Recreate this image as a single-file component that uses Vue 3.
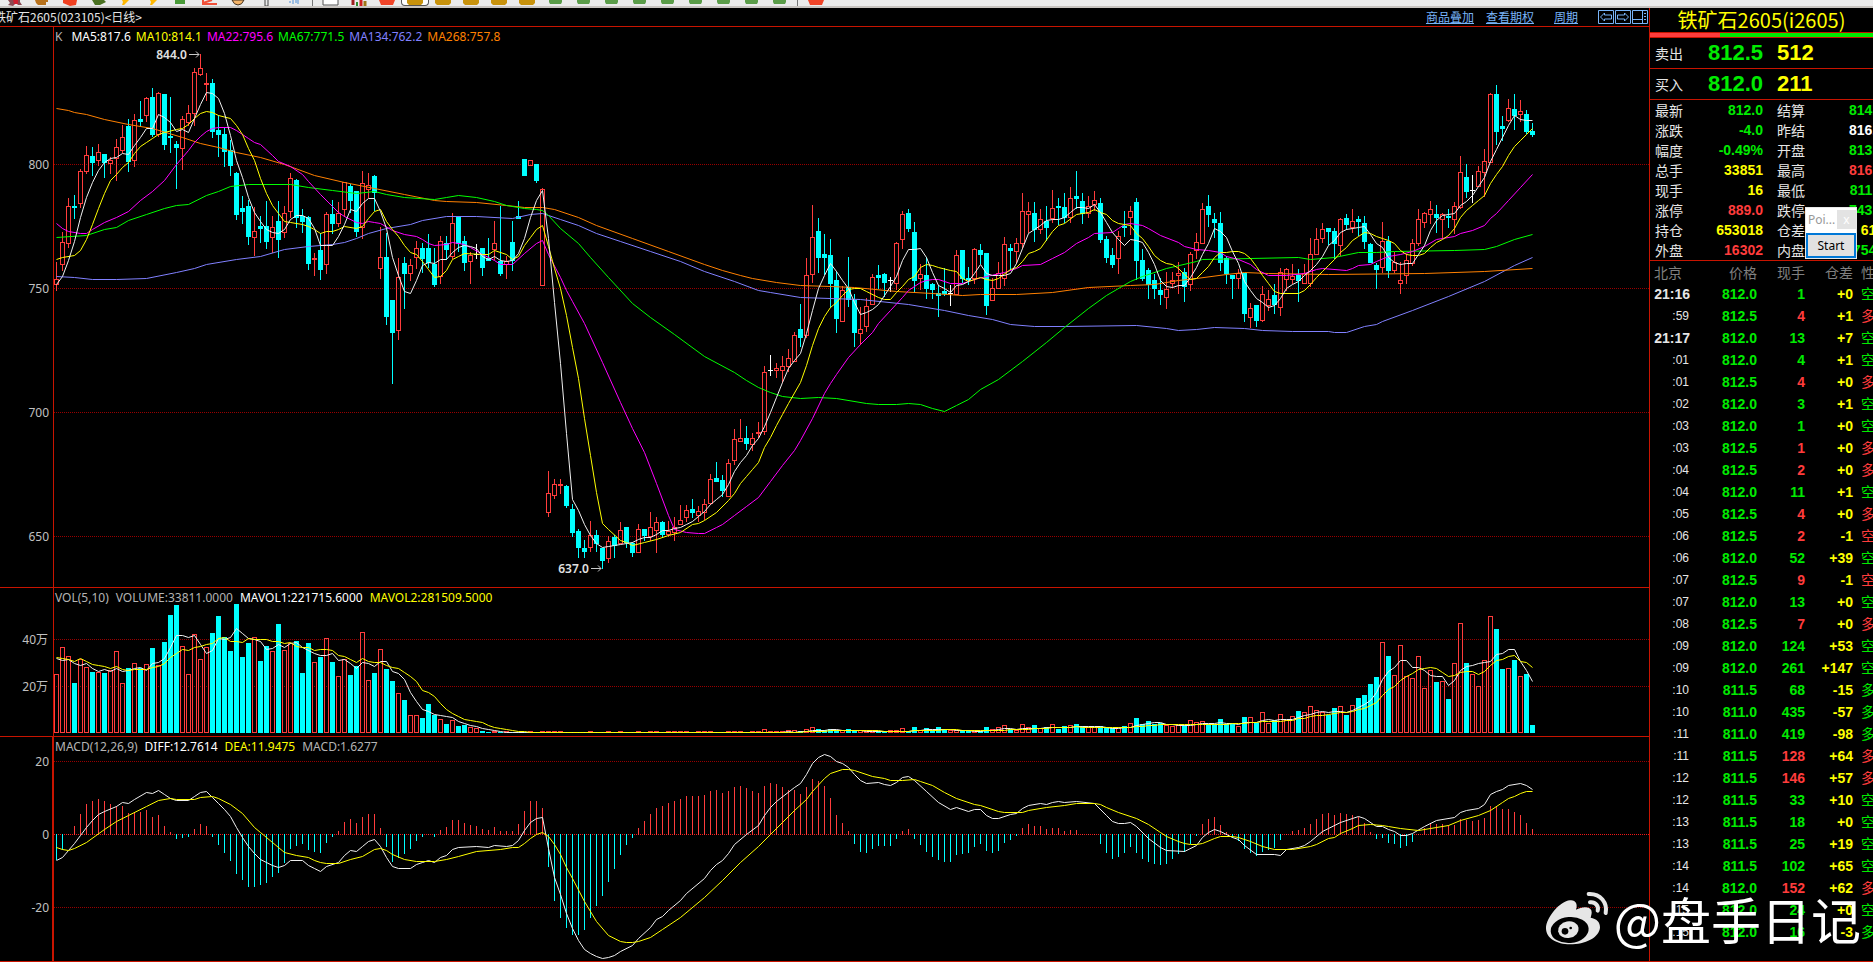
<script setup>
import { onMounted, onUnmounted, ref } from 'vue'

const FIRST_X = 56
const STEP = 6
const TOP = 27
const px = (i) => FIRST_X + i * STEP

// kind (r rising, c falling, w unchanged), then high, body top, body bottom and low levels
const candles = `
r262,279,284,291 r232,242,264,271 r198,206,243,248 c195,206,208,219 r169,171,203,208 r146,155,171,174 c147,156,163,176 r144,152,160,166 c154,154,163,178 r157,160,163,174
r139,147,158,181 r125,137,150,153 c119,126,162,172 r114,120,160,167 c101,119,122,126 r97,98,115,122 c88,97,135,137 r92,93,134,137 c94,94,145,150 c97,136,138,153
c141,144,148,189 r116,119,148,170 r105,113,122,126 r68,72,113,126 r54,68,74,76 r73,83,84,101 c79,83,132,138 c115,130,135,157 c128,134,152,167 c140,150,166,176
c172,173,215,220 c196,208,212,224 c200,206,237,245 r207,231,237,256 c216,226,229,243 c201,226,242,249 r216,227,237,253 c201,221,240,258 r206,213,232,238 r173,178,211,218
c179,180,218,228 c209,216,222,233 c216,217,264,270 r253,258,259,276 c233,250,270,280 r212,214,264,274 c200,214,224,234 r202,213,223,227 r182,182,209,217 c184,186,201,213
c191,191,232,237 r171,183,227,239 r173,185,189,198 c175,176,193,211 r227,257,268,279 c233,257,317,325 c300,300,333,384 r258,277,330,340 c257,263,274,309 r259,265,273,281
r241,248,257,269 c243,248,259,273 c234,248,263,268 c248,264,285,287 r236,241,276,284 c236,243,250,260 r213,223,256,259 c217,217,244,252 c236,241,263,271 r252,255,261,284
w244,254,254,259 c248,248,268,276 c238,258,261,261 r221,243,249,260 c206,261,274,276 r256,261,264,279 c221,242,261,271 c201,216,219,219 c159,159,176,176 r160,160,165,165
c164,164,181,183 r188,189,285,285 r471,493,512,517 r479,484,495,499 r479,484,485,494 c485,486,506,508 c504,509,533,537 c529,531,548,558 c540,548,552,558 r521,535,547,552
c530,535,544,552 c548,548,561,569 r536,541,558,563 c535,537,546,558 r522,530,543,544 c527,527,543,548 c542,543,553,557 r524,529,552,552 c529,529,536,541 r512,527,536,541
r517,522,530,553 c521,522,535,537 r521,531,534,537 r517,527,532,541 r505,520,524,525 r505,510,517,522 c499,509,513,518 r506,511,515,522 r499,504,512,520 r474,479,503,505
c462,478,482,482 c475,480,491,497 r459,463,496,497 r429,439,460,465 r419,438,441,441 c426,438,444,450 r433,438,444,451 r422,432,433,438 r366,372,431,435 w355,370,370,376
r363,368,370,378 r356,366,370,383 r349,358,366,372 r332,335,361,362 c304,329,338,347 r258,275,335,338 r205,237,274,283 c218,231,258,273 c234,254,258,275 c239,255,284,308
c271,280,319,333 r286,290,321,322 c257,287,300,307 c294,300,333,347 r307,329,333,345 r298,306,326,332 r274,277,304,305 c265,275,278,289 c273,274,283,297 w277,280,280,292
r242,243,283,290 r211,214,239,249 c209,213,229,232 c222,232,281,293 r264,274,278,290 c257,275,289,299 c283,284,290,299 c285,293,296,317 c268,291,294,296 w285,293,293,306
r250,255,294,295 c250,250,279,283 c267,278,280,285 r248,249,278,284 c244,250,255,264 c253,253,306,315 r278,288,300,301 r262,273,288,289 r237,244,278,286 c244,248,251,270
r238,243,251,264 r193,211,243,249 r202,211,214,233 c202,213,230,242 r209,219,229,234 c206,221,228,241 r190,208,218,223 c198,206,208,225 c193,207,218,223 r187,198,217,223
c171,196,199,209 c193,201,214,224 r196,206,213,218 r191,200,204,211 c198,203,240,243 c236,239,258,263 c248,255,265,268 r231,236,258,274 c211,226,228,237 r206,211,217,235
c198,202,261,280 c249,260,279,281 c268,270,285,299 c274,280,289,299 c278,290,295,305 r272,289,297,309 r272,280,283,288 r262,273,275,294 c268,272,287,302 r252,254,284,291
r233,242,250,259 r203,209,243,243 c195,206,215,227 c213,219,223,238 c212,223,263,271 c256,258,274,284 c275,275,279,299 r269,273,278,289 c273,273,314,322 r303,308,317,328
c305,305,321,327 r286,294,320,322 r290,299,305,311 c284,295,305,314 r268,272,307,316 r268,269,279,291 r264,276,279,284 c269,275,281,302 r264,273,283,284 r238,254,283,287
r228,239,254,255 r223,229,238,243 c228,228,232,245 c228,231,244,259 r218,219,245,256 c214,218,225,230 r209,221,227,233 c216,219,222,236 c216,223,242,249 c243,244,263,263
c263,265,270,289 r222,241,267,273 c236,241,271,278 r252,262,270,273 r262,280,283,294 r254,260,275,284 r239,243,263,266 r209,219,243,246 r212,213,222,228 r201,209,214,224
c205,214,218,233 r213,214,219,238 c209,216,218,228 r202,206,219,234 r156,172,207,209 c164,177,192,198 w175,190,190,203 r166,171,186,186 r149,161,172,197 r93,94,162,162
c85,94,132,145 c116,126,129,141 r99,108,120,122 c94,109,116,130 r100,111,114,122 c110,114,132,134 c123,131,135,137
`.trim().split(/\s+/).map((item, i) => {
  const [high, top, bottom, low] = item.slice(1).split(',').map(Number)
  return { i, x: px(i), kind: item[0], high, top, bottom, low }
})

const numbers = (text) => text.trim().split(/\s+/).map(Number)
const filled = (n, value) => Array(n).fill(value)

const volumes = [
  ...numbers(`675 648 657 683 660 668 672 673 673 671 652 684 668 664 668 665 648 666 642 615 605 647 675 635 660
    648 633 616 637 651 604 657 643 638 661 646 652 624 651 644 641 673 643 663 657 639 662 677 660 675
    666 633 681 673 650 669 681 694 700 716 716 718 704 715 720 724 721 726 725 728 729 731 732`),
  ...filled(45, 732),
  ...numbers(`730 732 732 732 731 731 731 730 728 729 730 729 730 731 729 731 731 731 731 731 731 731 731 729 731 727
    731 728 730 727 729 731 731 730 731 731 731 727 730 728 726 729 731 725 728 725 729 727 725 729 726 726
    724 726 728 728 726 728 728 728 726 724 718 724 721 724 723 726 727 726 725 721
    723 722 724 724 719 724 724 727 717 718 723 713 724 720 715 721 717 711 713 707 711 713 715 708 707 715
    706 698 695 684 677 643 656 676 646 677 679 657 689 671 682 682 699 664 624 663 675 687 661 617 629 669
    669 660 677 674 725`),
].map((y, i) => ({ x: px(i), y, kind: candles[i] ? candles[i].kind : 'c' }))

const histogram = numbers(`
859 849 834 826 814 804 801 799 801 804 806 806 813 812 812 810 817 815 826 832 838 837 836 829 824
826 836 844 852 860 873 879 886 886 884 882 876 872 862 848 845 843 849 851 852 842 836 831 822 819
823 817 814 814 828 846 861 857 853 848 840 836 834 836 830 827 820 820 823 825 826 829 830 827 831
831 831 824 811 801 801 808 866 900 917 927 934 934 929 917 905 895 881 868 854 844 837 828 821 814
808 806 803 801 799 796 796 796 795 791 790 793 791 787 786 788 791 793 786 783 784 787 790 790 794
787 779 781 786 798 815 823 831 843 851 852 848 845 845 845 838 831 829 838 844 851 856 859 861 861
854 853 852 846 843 850 852 850 842 839 835 828 824 826 826 829 828 828 831 830 830 834 834 834 843
852 858 856 852 846 852 858 861 863 864 863 858 853 851 843 835 824 819 817 825 832 837 840 848 852
855 851 849 847 839 834 831 830 828 824 819 814 813 815 813 814 815 817 823 832 838 837 842 843 847
845 841 834 828 824 824 824 825 825 819 820 821 820 818 806 807 809 809 812 815 823 829
`).map((y, i) => ({ x: px(i), y }))

const line = (pairs) => pairs.map(([i, y]) => `${px(i) + 0.5},${y + 0.5}`).join(' ')
const sparse = (text) => line(text.trim().split(/\s+/).map((p) => p.split(':').map(Number)))
const every = (text) => line(numbers(text).map((y, i) => [i, y]))

const average = (n, lead) =>
  line(volumes.map((_, i) => {
    if (i < n - 1) return [i, lead[i]]
    const part = volumes.slice(i - n + 1, i + 1)
    return [i, Math.round(part.reduce((sum, v) => sum + v.y, 0) / n)]
  }))

const priceLines = [
  { name: 'violet', points: sparse('0:276 3:277 6:279 10:279 15:278 20:272 23:268 25:264 30:259 34:256 38:249 42:246 46:244 48:242 50:238 52:233 55:228 59:224 61:220 65:216 70:216 76:218 79:214 81:213 84:219 87:225 90:233 94:241 99:251 104:261 108:271 113:281 117:290 119:292 124:297 134:299 142:304 148:310 152:315 156:319 159:324 163:326 168:326 180:325 185:328 187:330 190:329 193:327 198:328 201:330 206:331 212:331 213:332 215:332 218:326 220:324 221:321 226:310 232:296 238:281 243:265 246:257') },
  { name: 'orange', points: sparse('0:108 2:110 3:112 5:114 8:119 12:124 16:128 21:137 24:143 27:147 30:152 34:157 38:164 43:175 48:182 53:188 58:194 63:200 65:201 70:202 75:205 78:207 81:207 83:209 87:217 90:225 96:238 102:251 108:264 111:270 114:275 116:278 120:282 124:285 129:286 133:287 140:291 146:293 151:295 154:294 160:294 166:292 172:287 179:285 183:284 187:280 190:278 195:274 198:272 202:273 212:274 228:273 238:271 246:268') },
  { name: 'green', points: sparse('0:237 5:235 8:229 10:227 12:220 15:214 18:208 20:205 22:204 25:195 27:191 29:186 32:184 39:184 42:187 46:190 50:193 53:191 55:194 58:197 63:199 65:197 67:195 70:197 73:201 75:205 78:208 80:209 81:210 82:215 84:228 87:243 89:257 92:277 96:303 99:317 103:334 108:356 113:372 115:380 117:387 119:392 121:396 124:398 127:397 130:398 135:403 137:404 140:404 142:403 144:404 146:408 148:411 150:405 152:399 154:389 157:379 161:361 165:342 168:327 172:308 175:295 179:281 181:276 185:268 190:261 191:259 199:258 207:257 209:259 213:257 217:252 220:252 223:251 233:250 238:249 240:246 243:239 246:234') },
  { name: 'magenta', points: sparse('0:223 1:228 2:231 4:233 5:233 6:229 8:222 10:217 12:211 14:200 16:191 18:180 20:164 22:150 23:142 24:136 25:131 26:128 27:127 29:127 30:130 32:138 33:142 34:144 36:155 37:161 39:166 41:174 42:181 44:194 46:206 47:212 48:216 50:222 51:223 52:221 53:222 54:223 56:230 58:234 60:236 61:239 62:243 63:245 65:244 66:242 68:244 69:247 71:254 73:260 74:264 76:264 78:253 80:243 81:240 82:254 84:277 85:290 86:301 88:323 91:362 94:402 96:428 98:452 100:483 102:515 103:529 105:532 107:533 108:533 110:527 111:524 113:515 115:506 117:497 119:481 121:465 123:450 124:440 126:418 128:393 129:383 130:374 132:357 134:344 136:332 137:323 139:310 141:297 142:290 144:282 145:280 146:279 147:279 149:283 151:283 153:279 155:276 158:272 160:268 161:265 164:264 166:258 168:252 170:243 172:237 173:233 176:232 177:228 178:224 179:223 181:225 182:228 184:235 187:242 188:246 190:249 192:250 194:252 195:256 197:259 199:264 200:269 202:275 205:275 208:273 210:269 211:268 215:270 216:268 217:265 219:264 220:261 222:256 224:254 226:251 228:246 230:239 233:236 234:233 236:230 238:225 239:218 240:213 242:200 244:187 246:174') },
  { name: 'yellow', points: sparse('0:259 1:257 3:255 4:250 5:239 6:224 7:208 8:193 9:180 10:174 11:167 12:162 13:153 14:146 15:142 16:138 17:134 18:132 20:129 21:128 22:124 23:118 24:113 25:111 26:112 27:115 29:118 30:125 31:134 32:148 33:160 34:178 35:193 36:205 37:213 38:221 39:222 41:224 42:226 43:229 44:233 45:231 46:231 47:229 48:226 50:228 51:226 52:218 53:211 54:209 55:221 56:229 57:236 58:245 59:252 60:254 61:261 62:269 63:277 64:276 65:270 66:259 67:256 68:253 71:254 72:254 73:250 75:254 76:259 77:256 78:245 79:237 80:229 81:225 82:246 83:268 84:288 85:315 86:347 87:378 88:418 89:455 90:492 91:523 92:529 94:540 95:542 96:545 98:542 100:539 102:535 104:532 106:524 107:523 108:520 110:512 112:500 113:493 114:483 115:476 116:469 117:462 118:447 119:437 120:425 121:414 122:403 124:382 125:365 126:345 127:328 128:316 129:307 130:302 131:295 132:289 133:288 134:288 135:291 137:297 138:299 139:299 140:292 141:286 142:279 143:276 144:267 145:264 146:265 147:267 149:270 150:271 151:278 152:281 153:279 154:277 155:279 156:280 157:278 159:269 160:267 161:261 162:253 163:251 164:248 166:231 167:225 168:223 170:214 172:212 173:209 174:212 175:214 176:220 177:223 179:225 180:233 181:238 182:246 183:255 184:260 185:263 186:264 187:268 188:274 189:279 190:278 191:272 192:266 193:257 194:252 195:252 196:251 197:251 198:253 199:258 200:266 201:275 202:283 203:291 204:293 207:293 208:290 209:284 210:277 211:271 212:265 213:259 214:252 215:247 216:240 217:236 218:232 219:233 220:236 221:238 222:240 223:243 224:250 225:254 226:255 227:255 228:253 229:247 230:242 231:239 232:235 233:228 234:217 235:210 236:205 237:200 238:195 239:183 240:174 241:166 242:155 243:146 244:140 245:134 246:128') },
  { name: 'white', points: every(`284 276 260 241 217 197 182 170 162 158 157 153 154 145 137 128 128 114 117 122 131 129 132 118 104
    92 93 98 113 135 160 177 197 212 221 229 232 233 229 219 215 215 218 228 245 245 245 236 224 209
    211 203 198 198 211 228 257 275 291 293 280 265 262 263 259 259 252 247 245 246 248 256 259 256 260
    261 260 253 238 217 200 190 238 302 363 433 499 510 524 535 543 547 546 545 544 543 542 539 537 537
    534 530 530 528 527 524 521 516 511 504 499 494 484 471 462 455 445 438 426 412 397 382 368 360 353
    333 310 288 275 263 271 280 288 302 314 312 309 304 295 286 276 260 249 249 248 257 272 285 288 292
    285 284 281 273 264 273 275 275 275 273 263 248 233 229 225 220 219 219 217 212 207 207 208 204 212
    222 232 239 245 239 240 242 252 264 280 286 287 285 285 277 267 254 243 228 231 237 251 263 281 290
    298 302 307 305 298 288 284 281 275 270 264 256 245 240 232 229 228 227 226 234 243 247 257 262 264
    263 263 254 245 230 220 215 214 213 205 201 195 186 177 161 149 137 125 115 119 120 120`) },
]

const volumeLines = [
  { name: 'white', points: average(5, [658, 660, 659, 663]) },
  { name: 'yellow', points: average(10, [657, 658, 659, 661, 658, 661, 664, 665, 666]) },
]

const macdLines = [
  { name: 'white', points: sparse('0:860 1:857 2:850 3:843 4:835 5:827 6:820 7:814 8:811 10:806 11:802 12:803 13:799 15:792 16:793 17:790 18:794 19:798 20:800 22:800 23:796 24:792 25:791 26:797 27:803 28:809 29:816 30:827 31:837 32:846 33:853 34:859 35:862 36:865 37:867 38:865 39:860 41:860 42:865 43:868 44:871 45:866 47:862 48:855 49:850 50:851 51:846 52:841 53:839 54:846 55:857 56:866 57:868 59:868 60:864 61:862 62:860 63:862 64:857 65:855 66:849 67:847 70:846 72:847 73:845 75:846 76:845 77:840 78:830 79:822 80:818 81:817 82:848 83:877 84:894 85:913 86:928 87:940 88:949 89:953 90:956 91:958 92:957 93:955 94:951 96:945 97:938 99:927 100:919 101:916 102:910 104:900 105:893 108:878 109:870 110:864 111:860 112:853 113:844 115:834 117:825 118:815 119:807 120:801 123:787 124:783 125:774 126:763 127:757 128:754 129:756 130:761 131:763 132:767 133:774 134:780 135:783 137:782 138:784 139:785 140:782 141:777 142:776 143:780 145:791 147:802 149:809 150:807 152:811 153:809 154:809 155:815 156:818 157:818 159:814 160:813 161:808 162:805 164:803 165:804 166:802 167:801 168:802 170:801 173:803 175:815 176:821 177:823 178:823 179:822 180:826 182:838 184:847 185:850 188:851 190:845 191:837 192:832 193:829 194:831 196:837 197:839 198:845 200:854 203:854 204:855 205:849 207:847 208:845 209:841 211:831 212:828 214:822 216:818 217:816 218:818 220:826 221:826 222:829 223:831 224:835 225:835 226:833 228:826 230:820 233:817 234:812 235:810 237:808 238:804 239:794 240:791 241:789 242:785 244:783 245:785 246:789') },
  { name: 'yellow', points: sparse('0:847 1:849 2:850 3:848 5:842 8:829 10:821 12:815 15:806 17:800 19:798 20:799 23:799 24:797 26:796 27:798 29:804 31:813 33:827 34:832 36:842 38:852 40:855 42:857 43:860 44:862 45:863 47:863 49:859 51:856 53:849 54:848 55:850 56:854 58:859 60:861 63:861 65:859 67:856 70:851 74:849 76:847 77:847 78:843 79:838 80:834 81:832 82:836 83:844 84:854 85:867 86:878 88:901 90:921 92:935 94:941 95:942 96:942 97:941 99:937 101:929 104:917 108:897 111:880 114:862 117:846 119:834 121:822 123:810 125:799 126:791 128:778 129:773 131:769 132:769 133:770 136:776 138:778 139:780 141:780 143:779 144:781 146:785 148:792 150:798 153:804 154:805 157:811 158:812 161:812 162:810 165:807 168:805 170:803 173:803 174:804 175:807 177:812 180:818 182:824 184:832 185:836 187:841 188:843 189:844 190:844 191:843 193:838 194:836 196:836 197:837 199:841 201:846 203:849 206:849 209:846 210:844 212:838 213:837 214:833 216:828 217:825 219:824 221:825 222:826 224:828 227:830 229:828 230:827 232:825 234:820 237:815 239:810 241:802 242:798 243:796 244:793 245:791 246:791') },
]

const maLegend = [
  ['K', 'label wide'], ['MA5:817.6', 'white'], ['MA10:814.1', 'yellow'], ['MA22:795.6', 'magenta'],
  ['MA67:771.5', 'green'], ['MA134:762.2', 'violet'], ['MA268:757.8', 'orange'],
]
const volLegend = [
  ['VOL(5,10)', 'label'], ['VOLUME:33811.0000', 'label'], ['MAVOL1:221715.6000', 'white'], ['MAVOL2:281509.5000', 'yellow'],
]
const macdLegend = [
  ['MACD(12,26,9)', 'label'], ['DIFF:12.7614', 'white'], ['DEA:11.9475', 'yellow'], ['MACD:1.6277', 'label'],
]

const quotes = [
  ['最新', '812.0', 'green', '结算', '814.0', 'green'],
  ['涨跌', '-4.0', 'green', '昨结', '816.0', 'white'],
  ['幅度', '-0.49%', 'green', '开盘', '813.0', 'green'],
  ['总手', '33851', 'yellow', '最高', '816.0', 'red'],
  ['现手', '16', 'yellow', '最低', '811.0', 'green'],
  ['涨停', '889.0', 'red', '跌停', '743.0', 'green'],
  ['持仓', '653018', 'yellow', '仓差', '610', 'yellow'],
  ['外盘', '16302', 'red', '内盘', '17549', 'green'],
]

// time, price, volume, volume colour, open interest change, side, side colour
const ticks = `
21:16 812.0 1 green +0 空 green
:59 812.5 4 red +1 多 red
21:17 812.0 13 green +7 空 green
:01 812.0 4 green +1 空 green
:01 812.5 4 red +0 多 red
:02 812.0 3 green +1 空 green
:03 812.0 1 green +0 空 green
:03 812.5 1 red +0 多 red
:04 812.5 2 red +0 多 red
:04 812.0 11 green +1 空 green
:05 812.5 4 red +0 多 red
:06 812.5 2 red -1 空 red
:06 812.0 52 green +39 空 green
:07 812.5 9 red -1 空 red
:07 812.0 13 green +0 空 green
:08 812.5 7 red +0 多 red
:09 812.0 124 green +53 空 green
:09 812.0 261 green +147 空 green
:10 811.5 68 green -15 多 green
:10 811.0 435 green -57 多 green
:11 811.0 419 green -98 多 green
:11 811.5 128 red +64 多 red
:12 811.5 146 red +57 多 red
:12 811.5 33 green +10 空 green
:13 811.5 18 green +0 空 green
:13 811.5 25 green +19 空 green
:14 811.5 102 green +65 空 green
:14 812.0 152 red +62 多 red
:15 812.0 24 green +0 空 green
:15 812.0 16 green -3 多 green
`.trim().split('\n').map((row) => row.split(' '))

const tools = [
  'figure', 'pot', 'book', 'ball', 'bolt', 'bolt', 'block', 'chart', 'coin', 'pin', 'bars', 'sep',
  'screen', 'columns', 'seal', 'gold active', 'gold', 'gold', 'gold', 'gold',
  'leaf', 'leaf', 'leaf', 'leaf', 'leaf', 'leaf', 'leaf', 'leaf', 'leaf', 'sep', 'seal',
]

const dialogOpen = ref(true)
const onKey = (e) => { if (e.key === 'Escape') dialogOpen.value = false }
onMounted(() => window.addEventListener('keydown', onKey))
onUnmounted(() => window.removeEventListener('keydown', onKey))
</script>

<template>
  <div class="terminal">
    <div class="toolbar" role="toolbar" aria-label="工具栏">
      <template v-for="(tool, n) in tools" :key="n">
        <span v-if="tool === 'sep'" class="sep"></span>
        <button v-else type="button" class="tool" :class="tool" :aria-label="tool">
          <svg width="20" height="6" viewBox="0 0 20 6">
            <template v-if="tool === 'figure'">
              <path d="M4 0h12v2l2 3h-4l-2-2-3 3-5-1 2-2z" fill="#8a4a52" /><path d="M9 0h5v4h-4z" fill="#d02030" />
            </template>
            <path v-else-if="tool === 'pot'" d="M3 0h13v2h-2v3H6l-2-2z" fill="#b8721c" />
            <path v-else-if="tool === 'book'" d="M3 0h14l-1 5-6 1-7-3z" fill="#f04020" />
            <path v-else-if="tool === 'ball'" d="M4 0h12l2 2-6 3H7z" fill="#4a7020" />
            <path v-else-if="tool === 'bolt'" d="M6 0h7l-5 5H6l1-3z" fill="#ffb800" />
            <rect v-else-if="tool === 'block'" x="3" width="10" height="4" fill="#4a9a38" />
            <path v-else-if="tool === 'chart'" d="M3 0v4h14M3 3l9-3" fill="none" stroke="#f05038" stroke-width="2" />
            <path v-else-if="tool === 'coin'" d="M4 0q2 5 6 5t6-5z" fill="#f5b468" stroke="#403020" stroke-width="1" />
            <path v-else-if="tool === 'pin'" d="M9 0v6h3V0" fill="none" stroke="#444" stroke-width="1" />
            <path v-else-if="tool === 'bars'" d="M6 3v-2M9 4V0M12 3V0M14 4V0" stroke="#4c8fd8" stroke-width="1" />
            <path v-else-if="tool === 'screen'" d="M2 0v5h15V0" fill="#fff" stroke="#555" stroke-width="1" />
            <template v-else-if="tool === 'columns'">
              <path d="M4 0v5" stroke="#a02020" stroke-width="3" /><path d="M8 2v4" stroke="#2c8a2c" stroke-width="2" />
              <path d="M12 0v6" stroke="#d02020" stroke-width="3" /><path d="M16 1v5" stroke="#a07818" stroke-width="3" />
            </template>
            <path v-else-if="tool === 'seal'" d="M2 0h16l-2 5H4z" fill="#f04428" />
            <path v-else-if="tool.startsWith('gold')" d="M2 0h16v3l-2 2H4L2 3z" fill="#c8920c" />
            <path v-else d="M4 0h13v2l-1 2H5L4 2z" fill="#5a9c48" />
          </svg>
        </button>
      </template>
    </div>

    <main class="work">
      <header class="titlebar">
        <h1>铁矿石2605(023105)&lt;日线&gt;</h1>
        <nav>
          <a href="#overlay">商品叠加</a>
          <a href="#options">查看期权</a>
          <a href="#period" class="period">周期</a>
          <span class="modes">
            <button type="button" aria-label="左移">
              <svg width="16" height="14" viewBox="0 0 16 14"><path d="M.5.5h15v13H.5zM2.500 7l4-4v2h7v4h-7v2z" /></svg>
            </button>
            <button type="button" aria-label="右移">
              <svg width="16" height="14" viewBox="0 0 16 14"><path d="M.5.5h15v13H.5zM13.500 7l-4-4v2h-7v4h7v2z" /></svg>
            </button>
            <button type="button" aria-label="面板">
              <svg width="16" height="14" viewBox="0 0 16 14"><path d="M.5.5h15v13H.5zM.5 9.500h10M10.500.5v13M12 3.500h2M12 6.500h2M12 9.500h2" /></svg>
            </button>
          </span>
        </nav>
      </header>

      <section class="panel price" aria-label="K线">
        <svg class="plot" width="100%" height="100%">
          <g :transform="`translate(0,${-TOP})`">
            <line v-for="y in [164, 288, 412, 536]" :key="y" class="grid" x1="54" x2="100%" :y1="y + 0.5" :y2="y + 0.5" />
            <text v-for="(y, n) in [164, 288, 412, 536]" :key="'t' + n" class="axis" x="49" :y="y + 5">{{ 800 - n * 50 }}</text>
            <g class="crisp">
              <g v-for="c in candles" :key="c.i" :class="c.kind">
                <rect v-if="c.kind === 'c'" :x="c.x" :y="c.high" width="1" :height="c.low - c.high" />
                <template v-else>
                  <rect class="wick" :x="c.x" :y="c.high" width="1" :height="Math.max(c.top - c.high, 0)" />
                  <rect class="wick" :x="c.x" :y="c.bottom" width="1" :height="Math.max(c.low - c.bottom, 0)" />
                </template>
                <rect v-if="c.kind === 'c'" :x="c.x - 2" :y="c.top" width="5" :height="c.bottom - c.top" />
                <rect v-else-if="c.kind === 'r'" class="hollow" :x="c.x - 1.5" :y="c.top + 0.5" width="4" :height="c.bottom - c.top" />
                <rect v-else :x="c.x - 2" :y="c.top" width="5" height="1" />
              </g>
            </g>
            <polyline v-for="l in priceLines" :key="l.name" class="curve" :class="l.name" :points="l.points" />
            <text class="mark" x="187" y="59">844.0</text>
            <path class="arrow" d="M189 54.500h10M196 51.500l3 3-3 3" />
            <text class="mark" x="589" y="573">637.0</text>
            <path class="arrow" d="M591 568.500h10M598 565.500l3 3-3 3" />
          </g>
        </svg>
        <p class="legend"><span v-for="[text, tone] in maLegend" :key="text" :class="tone">{{ text }}</span></p>
      </section>

      <section class="panel volume" aria-label="成交量">
        <svg class="plot" width="100%" height="100%">
          <g transform="translate(0,-588)">
            <line v-for="y in [639, 686]" :key="y" class="grid" x1="54" x2="100%" :y1="y + 0.5" :y2="y + 0.5" />
            <text class="axis" x="48" y="644">40万</text>
            <text class="axis" x="48" y="691">20万</text>
            <g class="crisp">
              <g v-for="(v, n) in volumes" :key="n" :class="v.kind === 'c' ? 'c' : 'r'">
                <rect v-if="v.kind === 'c'" :x="v.x - 2" :y="v.y" width="5" :height="733 - v.y" />
                <rect v-else class="hollow" :x="v.x - 1.5" :y="v.y - 0.5" width="4" :height="733 - v.y" />
              </g>
            </g>
            <polyline v-for="l in volumeLines" :key="l.name" class="curve" :class="l.name" :points="l.points" />
          </g>
        </svg>
        <p class="legend"><span v-for="[text, tone] in volLegend" :key="text" :class="tone">{{ text }}</span></p>
      </section>

      <section class="panel macd" aria-label="MACD">
        <svg class="plot" width="100%" height="100%">
          <g transform="translate(0,-737)">
            <line class="grid" x1="54" x2="100%" y1="761.5" y2="761.5" />
            <line class="grid zero" x1="54" x2="100%" y1="834.5" y2="834.5" />
            <line class="grid" x1="54" x2="100%" y1="907.5" y2="907.5" />
            <text class="axis" x="49" y="766">20</text>
            <text class="axis" x="49" y="839">0</text>
            <text class="axis" x="49" y="912">-20</text>
            <g class="crisp">
              <rect
                v-for="h in histogram" :key="h.x" :class="h.y > 834 ? 'down' : 'up'" :x="h.x"
                :y="Math.min(h.y, 834)" width="1" :height="Math.abs(h.y - 834) + 1"
              />
            </g>
            <polyline v-for="l in macdLines" :key="l.name" class="curve" :class="l.name" :points="l.points" />
          </g>
        </svg>
        <p class="legend"><span v-for="[text, tone] in macdLegend" :key="text" :class="tone">{{ text }}</span></p>
      </section>
    </main>

    <aside class="side">
      <h2>铁矿石2605(i2605)</h2>
      <div class="ratio"><span></span></div>
      <dl class="book-row"><dt>卖出</dt><dd class="green">812.5</dd><dd class="yellow size">512</dd></dl>
      <dl class="book-row"><dt>买入</dt><dd class="green">812.0</dd><dd class="yellow size">211</dd></dl>
      <table class="quotes">
        <tbody>
          <tr v-for="q in quotes" :key="q[0]">
            <th scope="row">{{ q[0] }}</th><td class="first" :class="q[2]">{{ q[1] }}</td>
            <th scope="row" class="next">{{ q[3] }}</th><td class="second" :class="q[5]">{{ q[4] }}</td>
          </tr>
        </tbody>
      </table>
      <table class="ticks">
        <thead>
          <tr><th scope="col" class="time">北京</th><th scope="col" class="cost">价格</th><th scope="col" class="vol">现手</th><th scope="col" class="diff">仓差</th><th scope="col" class="kind">性</th></tr>
        </thead>
        <tbody>
          <tr v-for="(t, n) in ticks" :key="n">
            <td class="time" :class="{ minor: t[0].startsWith(':') }">{{ t[0] }}</td>
            <td class="cost green">{{ t[1] }}</td>
            <td class="vol" :class="t[3]">{{ t[2] }}</td>
            <td class="diff yellow">{{ t[4] }}</td>
            <td class="kind" :class="t[6]">{{ t[5] }}</td>
          </tr>
        </tbody>
      </table>
    </aside>

    <div v-if="dialogOpen" class="dialog" role="dialog" aria-label="Poi...">
      <div class="caption"><span>Poi...</span><button type="button" class="close" aria-label="关闭" @click="dialogOpen = false">x</button></div>
      <button type="button" class="start">Start</button>
    </div>

    <div class="signature">
      <svg width="67" height="55" viewBox="0 0 201 165">
        <path fill="#e6e6e6" d="M75 28C92 26 99 40 93 56c17-9 41-11 46 2 3 9-1 16-2 22 17 3 29 13 28 30-3 30-44 50-90 50C35 160 3 142 3 112 3 80 45 30 75 28z" />
        <ellipse cx="74" cy="117" rx="57" ry="39" transform="rotate(-5 74 117)" />
        <ellipse cx="70" cy="116" rx="31" ry="25" fill="#e6e6e6" transform="rotate(-10 70 116)" />
        <circle cx="60" cy="121" r="10" /><circle cx="77" cy="111" r="4" />
        <path d="M131 9c36-2 57 27 51 57M135 34c17-2 27 12 23 25" fill="none" stroke="#e6e6e6" stroke-width="12" stroke-linecap="round" />
      </svg>
      <span>@盘手日记</span>
    </div>
  </div>
</template>

<style>
body { background: #000; overflow: hidden; }
</style>

<style scoped>
.terminal {
  position: relative;
  display: grid;
  grid-template-columns: minmax(0, 1fr) 224px;
  grid-template-rows: 8px minmax(0, 1fr);
  min-height: 100vh;
  overflow: hidden;
  box-sizing: border-box;
  background: #000;
  color: #e6e6e6;
  font: 12px/16px "Noto Sans", "Noto Sans CJK SC", sans-serif;
}
.terminal * { box-sizing: border-box; }
h1, h2, p, dl, dd { margin: 0; font-weight: 400; }
button { padding: 0; border: 0; background: none; font: inherit; }

.toolbar {
  grid-column: 1 / -1;
  display: flex;
  overflow: hidden;
  background: #ebebeb;
  border-bottom: 2px solid #c8c4c0;
}
.tool { flex: none; width: 28px; height: 6px; display: flex; justify-content: center; overflow: hidden; }
.tool svg { display: block; }
.tool.active { background: #fff; border: 1px solid #555; border-top: 0; border-radius: 0 0 4px 4px; }
.sep { width: 1px; margin: 0 4px; background: #777; }

.work { display: flex; flex-direction: column; min-width: 0; }
.titlebar {
  flex: none;
  display: flex;
  justify-content: space-between;
  align-items: center;
  height: 19px;
  border-bottom: 1px solid #c81400;
}
.titlebar h1 { margin-left: -6px; font: 12px/18px "Noto Sans CJK SC", sans-serif; white-space: nowrap; }
.titlebar nav { display: flex; align-items: center; gap: 12px; padding-right: 1px; }
.titlebar a { color: #78b4f8; font: 12px/16px "Noto Sans CJK SC", sans-serif; }
.titlebar .period { margin-left: 8px; }
.modes { display: flex; gap: 1px; margin-left: 8px; }
.modes svg { display: block; fill: none; stroke: #78b4f8; stroke-width: 1; }

.panel { position: relative; border-bottom: 1px solid #c81400; }
.panel::before { content: ""; position: absolute; top: 0; bottom: 0; left: 53px; width: 1px; background: #c81400; }
.price { flex: 1 1 561px; min-height: 561px; }
.volume { flex: 0 0 149px; }
.macd { flex: 0 0 225px; }
.macd::before { left: 52px; width: 2px; }
.plot { position: absolute; inset: 0; display: block; }
.legend { position: relative; display: flex; gap: 5px; padding: 2px 0 0 55px; white-space: nowrap; }
.volume .legend, .macd .legend { gap: 7px; }
.legend .wide { margin-right: 4px; }
.legend .label { color: #b4b4b4; }

.grid { stroke: #980000; stroke-width: 1; stroke-dasharray: 1 1; shape-rendering: crispEdges; }
.grid.zero { stroke: #f01818; }
.axis { fill: #c0c0c0; text-anchor: end; font-size: 12px; }
.mark { fill: #e0e0e0; text-anchor: end; font-size: 12px; font-weight: 600; }
.arrow { fill: none; stroke: #c8c8c8; stroke-width: 1; }
.crisp { shape-rendering: crispEdges; }
.c, .down { fill: #0ff; }
.r, .up { fill: #ff3c3c; }
.w { fill: #fff; }
.hollow { fill: none; stroke: #ff3c3c; stroke-width: 1; }
.curve { fill: none; stroke-width: 1; }

.white { color: #fff; }
.yellow { color: #ff0; }
.magenta { color: #f0f; }
.green { color: #0f0; }
.violet { color: #8080ff; }
.orange { color: #ff8000; }
.red { color: #ff3c3c; }
.curve.white { stroke: #f0f0f0; }
.curve.yellow { stroke: #ff0; }
.curve.magenta { stroke: #f0f; }
.curve.green { stroke: #0f0; }
.curve.violet { stroke: #8080ff; }
.curve.orange { stroke: #ff8000; }

.side { min-width: 0; overflow: hidden; border-left: 1px solid #c81400; border-bottom: 1px solid #c81400; }
.side .green { color: #00eb00; }
.side h2 { height: 24px; color: #ff0; font: 20px/24px "Noto Sans CJK SC", sans-serif; text-align: center; white-space: nowrap; }
.ratio { height: 6px; border: solid #c81400; border-width: 1px 0; background: #00eb00; }
.ratio span { display: block; width: 70px; height: 100%; background: #ff3c3c; }
.book-row { display: flex; align-items: center; height: 31px; padding-left: 5px; border-bottom: 1px solid #c81400; }
.book-row dt { width: 28px; font: 14px/20px "Noto Sans CJK SC", sans-serif; }
.book-row dd { width: 80px; text-align: right; font: bold 22px/28px "Liberation Sans", sans-serif; }
.book-row .size { text-align: left; padding-left: 14px; }

table { border-collapse: collapse; table-layout: fixed; }
th, td { padding: 0; font: bold 14px/20px "Liberation Sans", "Noto Sans CJK SC", sans-serif; text-align: right; white-space: nowrap; }
th { font-family: "Noto Sans CJK SC", sans-serif; font-weight: 400; }
.quotes { width: 234px; border-bottom: 1px solid #c81400; }
.quotes tr { height: 20px; }
.quotes th { width: 33px; text-align: right; }
.quotes .first { width: 80px; }
.quotes .next { width: 42px; }
.ticks { width: 234px; }
.ticks tr { height: 22px; }
.ticks th { color: #808080; }
.ticks .time { width: 40px; }
.ticks th.time { padding-right: 8px; }
.ticks .minor { font-weight: 400; font-size: 12px; padding-right: 1px; }
.ticks .cost { width: 67px; }
.ticks .vol, .ticks .diff { width: 48px; }
.ticks .kind { font-weight: 400; text-align: left; padding-left: 8px; }

.dialog { position: absolute; top: 207px; right: 16px; width: 52px; background: #fff; border: 1px solid #e8e8e8; }
.caption { display: flex; justify-content: space-between; height: 25px; padding: 2px 0 4px 2px; color: #999; line-height: 20px; }
.close { width: 19px; background: #e3e3e3; color: #fff; }
.start { display: block; width: 100%; height: 25px; background: #e1e1e1; border: 2px solid #0078d7; color: #000; }

.signature {
  position: absolute;
  right: 12px;
  bottom: 8px;
  display: flex;
  align-items: center;
  gap: 2px;
  color: #fff;
  font: 50px/72px "Noto Sans CJK SC", sans-serif;
  pointer-events: none;
}
</style>
